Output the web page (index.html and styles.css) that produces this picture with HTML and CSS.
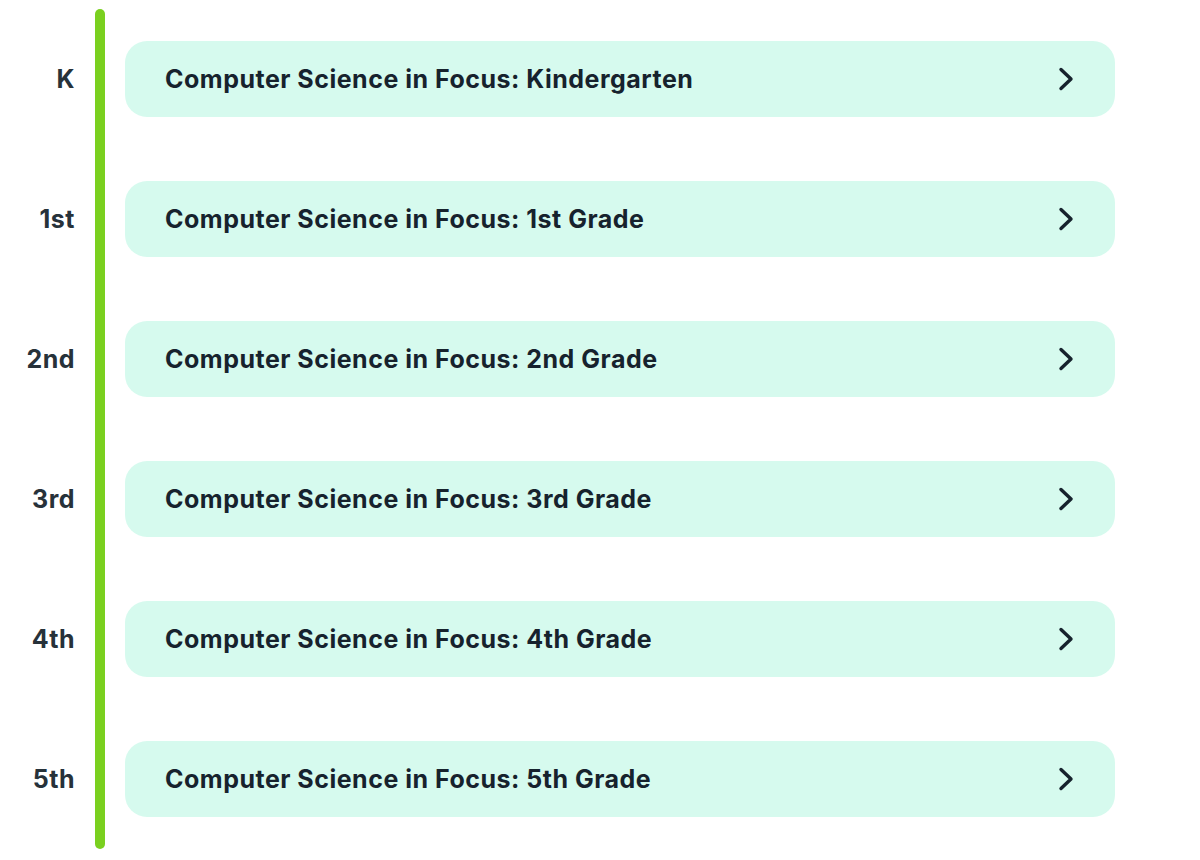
FILE: index.html
```html
<!DOCTYPE html>
<html lang="en">
<head>
  <meta charset="UTF-8">
  <title>Computer Science in Focus</title>
  <link rel="stylesheet" href="styles.css">
</head>
<body>
  <div class="timeline">
    <div class="line"></div>

    <div class="grade">K</div>
    <a class="course" href="#">
      <span>Computer Science in Focus: Kindergarten</span>
      <svg class="chev" viewBox="0 0 16 24"><path d="M3 2.5 L13 12 L3 21.5"/></svg>
    </a>

    <div class="grade">1st</div>
    <a class="course" href="#">
      <span>Computer Science in Focus: 1st Grade</span>
      <svg class="chev" viewBox="0 0 16 24"><path d="M3 2.5 L13 12 L3 21.5"/></svg>
    </a>

    <div class="grade">2nd</div>
    <a class="course" href="#">
      <span>Computer Science in Focus: 2nd Grade</span>
      <svg class="chev" viewBox="0 0 16 24"><path d="M3 2.5 L13 12 L3 21.5"/></svg>
    </a>

    <div class="grade">3rd</div>
    <a class="course" href="#">
      <span>Computer Science in Focus: 3rd Grade</span>
      <svg class="chev" viewBox="0 0 16 24"><path d="M3 2.5 L13 12 L3 21.5"/></svg>
    </a>

    <div class="grade">4th</div>
    <a class="course" href="#">
      <span>Computer Science in Focus: 4th Grade</span>
      <svg class="chev" viewBox="0 0 16 24"><path d="M3 2.5 L13 12 L3 21.5"/></svg>
    </a>

    <div class="grade">5th</div>
    <a class="course" href="#">
      <span>Computer Science in Focus: 5th Grade</span>
      <svg class="chev" viewBox="0 0 16 24"><path d="M3 2.5 L13 12 L3 21.5"/></svg>
    </a>
  </div>
</body>
</html>
```
FILE: styles.css
```css
*
    {
    margin: 0;
    padding: 0;
    box-sizing: border-box;
    }

:root
    {
    --grn: #7ad01f;
    --mnt: #d6faee;
    --ink: #16222d;
    --lbl: #27323a;
    }

body
    {
    background: #ffffff;
    font-family: "Inter", "Liberation Sans", sans-serif;
    }

.timeline
    {
    display: grid;
    grid-template-columns: 75px 20px 10px 20px 990px;
    grid-auto-rows: 140px;
    padding-top: 9px;
    }

.line
    {
    grid-column: 3;
    grid-row: 1 / span 6;
    background: var(--grn);
    border-radius: 5px;
    }

.grade
    {
    grid-column: 1;
    align-self: center;
    text-align: right;
    font-size: 25px;
    font-weight: 700;
    color: var(--lbl);
    letter-spacing: 0.5px;
    }

.course
    {
    grid-column: 5;
    align-self: center;
    height: 76px;
    display: flex;
    align-items: center;
    justify-content: space-between;
    padding: 0 41px 0 40px;
    background: var(--mnt);
    border-radius: 22px;
    text-decoration: none;
    font-size: 25px;
    font-weight: 700;
    color: var(--ink);
    letter-spacing: 0.5px;
    }

.chev
    {
    width: 16px;
    height: 24px;
    fill: none;
    stroke: var(--ink);
    stroke-width: 3.4;
    stroke-linecap: round;
    stroke-linejoin: round;
    }
```
